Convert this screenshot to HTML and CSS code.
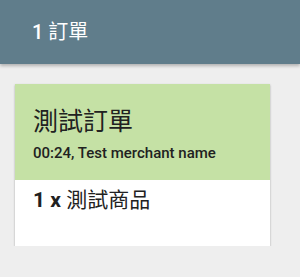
FILE: index.html
```html
<!DOCTYPE html>
<html>

<head>
  <meta charset="utf-8">
  <title>訂單</title>
  <link rel="stylesheet" href="styles.css">
</head>

<body>
  <div class="toolbar">
    <span class="toolbar-title"><span class="count">1</span> 訂單</span>
  </div>

  <div class="order-list">
    <div class="order-card">
      <div class="order-head">
        <div class="order-title">測試訂單</div>
        <div class="order-sub">00:24, Test merchant name</div>
      </div>
      <div class="order-body">
        <div class="order-item"><b>1 x</b> 測試商品</div>
      </div>
    </div>
  </div>
</body>

</html>
```

FILE: styles.css
```css
body {
  margin: 0;
  background-color: #eeeeee;
  font-family: Roboto, "Noto Sans CJK TC", sans-serif;
  color: #212121;
}

.toolbar {
  height: 64px;
  background-color: #607d8b;
  display: flex;
  align-items: center;
  padding-left: 32px;
  box-shadow: 0 2px 3px rgba(0, 0, 0, 0.25);
}

.toolbar-title {
  color: #ffffff;
  font-size: 20px;
  line-height: 28px;
}

.toolbar-title .count {
  font-weight: 500;
}

.order-list {
  padding: 20px 0 0 15px;
}

.order-card {
  width: 255px;
  background-color: #ffffff;
  box-shadow: 0 1px 2px rgba(0, 0, 0, 0.3);
}

.order-head {
  background-color: #c5e1a5;
  padding: 22px 18px 17px 18px;
}

.order-title {
  font-size: 25px;
  line-height: 32px;
}

.order-sub {
  font-size: 15px;
  font-weight: 500;
  line-height: 20px;
  margin-top: 5px;
}

.order-body {
  padding: 6px 18px 32px 18px;
}

.order-item {
  font-size: 21px;
  line-height: 28px;
}

.order-item b {
  font-weight: bold;
}
```
